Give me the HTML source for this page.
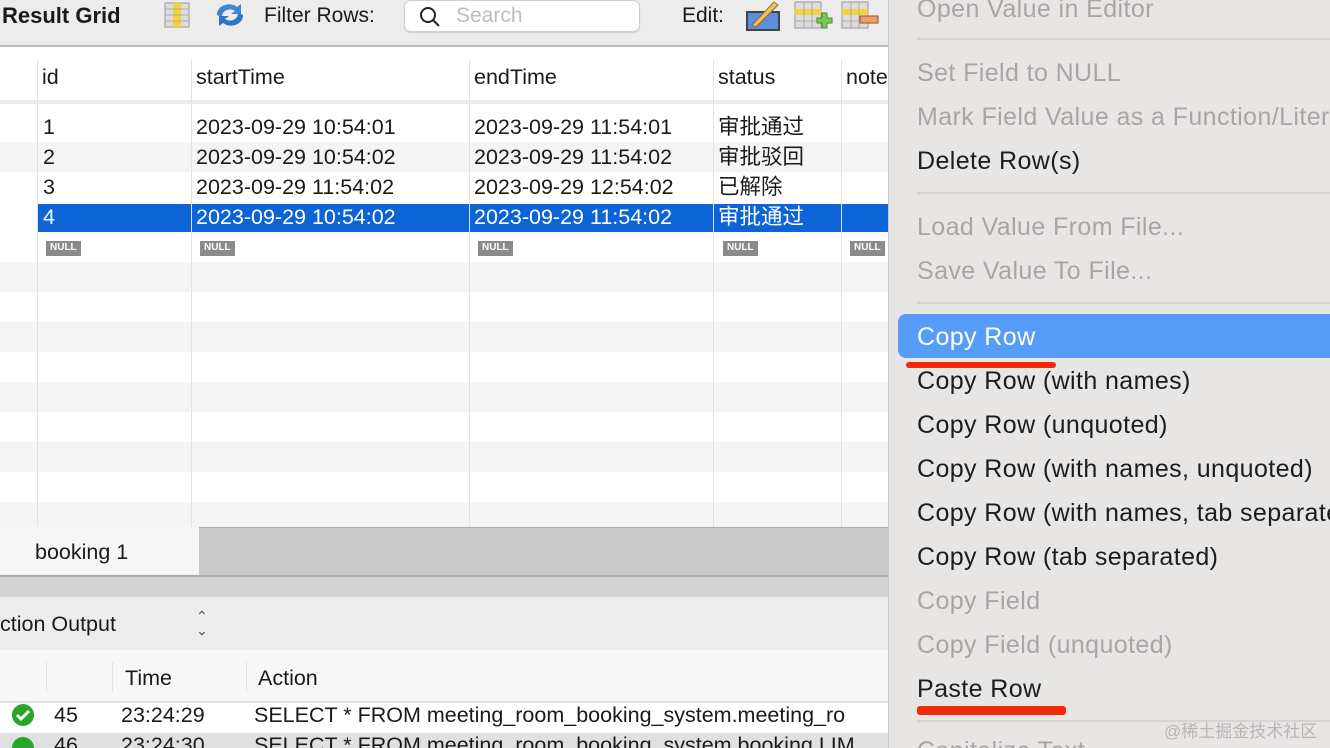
<!DOCTYPE html>
<html><head><meta charset="utf-8"><style>
*{margin:0;padding:0;box-sizing:border-box}
html,body{width:1330px;height:748px;overflow:hidden}
body{position:relative;background:#fff;font-family:"Liberation Sans","Noto Sans CJK SC",sans-serif;color:#1a1a1a}
.a{position:absolute;white-space:nowrap}
.t{font-size:21.5px;line-height:30px}
.vl{position:absolute;width:1px;background:#e2e2e2}
.null{position:absolute;background:#8a8a8a;color:#fff;font-size:10px;font-weight:bold;line-height:14px;padding:0 4px;height:15px}
.m{position:absolute;left:917px;font-size:25px;letter-spacing:0.4px;line-height:30px;color:#1c1c1c;white-space:nowrap}
.g{color:#a8a6a5}
.sep{position:absolute;left:917px;right:0;height:2px;background:#d6d4d3}
</style></head><body>
<div class="a" style="left:0;top:0;width:888px;height:47px;background:#ececec;border-bottom:2px solid #b8b8b8"></div>
<div class="a" style="left:2px;top:1px;font-size:22px;font-weight:bold;line-height:30px">Result Grid</div>
<svg class="a" style="left:164px;top:2px" width="26" height="26"><rect x="1" y="1" width="24" height="24" fill="#ddd" stroke="#999"/><rect x="9" y="1" width="8" height="24" fill="#f3d23a"/><path d="M1 7h24M1 13h24M1 19h24" stroke="#aaa"/></svg>
<svg class="a" style="left:213px;top:1px" width="34" height="28"><path d="M4 14a12 10 0 0 1 20-8l4-3v10h-10l4-3a8 7 0 0 0-13 6z" fill="#3a86d6"/><path d="M30 14a12 10 0 0 1-20 8l-4 3v-10h10l-4 3a8 7 0 0 0 13-6z" fill="#2d74c4"/></svg>
<div class="a" style="left:264px;top:1px;font-size:21px;line-height:30px">Filter Rows:</div>
<div class="a" style="left:404px;top:0;width:236px;height:32px;background:#fff;border:1px solid #d0d0d0;border-radius:7px;box-shadow:0 1px 1px #ccc"></div>
<svg class="a" style="left:418px;top:5px" width="24" height="24"><circle cx="10" cy="10" r="7" fill="none" stroke="#222" stroke-width="2"/><path d="M15 15l6 6" stroke="#222" stroke-width="2"/></svg>
<div class="a" style="left:456px;top:1px;font-size:21px;line-height:30px;color:#bdbdbd">Search</div>
<div class="a" style="left:682px;top:1px;font-size:21px;line-height:30px">Edit:</div>
<svg class="a" style="left:745px;top:0" width="38" height="32"><rect x="2" y="12" width="32" height="18" fill="#5b8ede" stroke="#444" stroke-width="2"/><path d="M7 25l22-23 4 3-22 22z" fill="#f0c060" stroke="#8a6a30"/></svg>
<svg class="a" style="left:793px;top:0" width="40" height="32"><rect x="2" y="2" width="26" height="26" fill="#ddd" stroke="#999"/><rect x="2" y="9" width="26" height="6" fill="#f3d23a"/><path d="M2 21h26M11 2v26M19 2v26" stroke="#aaa"/><path d="M24 18h5v-5h5v5h5v5h-5v5h-5v-5h-5z" fill="#7ec850" stroke="#4a8a30"/></svg>
<svg class="a" style="left:840px;top:0" width="40" height="32"><rect x="2" y="2" width="26" height="26" fill="#ddd" stroke="#999"/><rect x="2" y="9" width="26" height="6" fill="#f3d23a"/><path d="M2 21h26M11 2v26M19 2v26" stroke="#aaa"/><rect x="20" y="16" width="18" height="7" fill="#e8a070" stroke="#a05020"/></svg>
<div class="a" style="left:0;top:49px;width:888px;height:55px;background:#fff;border-bottom:4px solid #ececec"></div>
<div class="a t" style="left:42px;top:62px">id</div>
<div class="a t" style="left:196px;top:62px">startTime</div>
<div class="a t" style="left:474px;top:62px">endTime</div>
<div class="a t" style="left:718px;top:62px">status</div>
<div class="a t" style="left:846px;top:62px">note</div>
<div class="a" style="left:0;top:142px;width:888px;height:30px;background:#f4f4f4"></div>
<div class="a" style="left:0;top:262px;width:888px;height:30px;background:#f4f4f4"></div>
<div class="a" style="left:0;top:322px;width:888px;height:30px;background:#f4f4f4"></div>
<div class="a" style="left:0;top:382px;width:888px;height:30px;background:#f4f4f4"></div>
<div class="a" style="left:0;top:442px;width:888px;height:30px;background:#f4f4f4"></div>
<div class="a" style="left:0;top:502px;width:888px;height:25px;background:#f4f4f4"></div>
<div class="a" style="left:38px;top:204px;width:850px;height:28px;background:#0d64d6"></div>
<div class="vl" style="left:37px;top:60px;height:467px"></div>
<div class="vl" style="left:191px;top:60px;height:467px"></div>
<div class="vl" style="left:469px;top:60px;height:467px"></div>
<div class="vl" style="left:713px;top:60px;height:467px"></div>
<div class="vl" style="left:841px;top:60px;height:467px"></div>
<div class="a t" style="left:43px;top:112px">1</div><div class="a t" style="left:196px;top:112px">2023-09-29 10:54:01</div><div class="a t" style="left:474px;top:112px">2023-09-29 11:54:01</div><div class="a t" style="left:718px;top:112px">审批通过</div>
<div class="a t" style="left:43px;top:142px">2</div><div class="a t" style="left:196px;top:142px">2023-09-29 10:54:02</div><div class="a t" style="left:474px;top:142px">2023-09-29 11:54:02</div><div class="a t" style="left:718px;top:142px">审批驳回</div>
<div class="a t" style="left:43px;top:172px">3</div><div class="a t" style="left:196px;top:172px">2023-09-29 11:54:02</div><div class="a t" style="left:474px;top:172px">2023-09-29 12:54:02</div><div class="a t" style="left:718px;top:172px">已解除</div>
<div class="a t" style="left:43px;top:202px;color:#fff">4</div><div class="a t" style="left:196px;top:202px;color:#fff">2023-09-29 10:54:02</div><div class="a t" style="left:474px;top:202px;color:#fff">2023-09-29 11:54:02</div><div class="a t" style="left:718px;top:202px;color:#fff">审批通过</div>
<div class="null" style="left:46px;top:241px">NULL</div><div class="null" style="left:200px;top:241px">NULL</div><div class="null" style="left:478px;top:241px">NULL</div><div class="null" style="left:723px;top:241px">NULL</div><div class="null" style="left:850px;top:241px">NULL</div>
<div class="a" style="left:0;top:527px;width:888px;height:50px;background:#c9c9c9;border-top:1px solid #aaa;border-bottom:2px solid #aaa"></div>
<div class="a" style="left:0;top:527px;width:199px;height:48px;background:#f6f6f6"></div>
<div class="a t" style="left:35px;top:537px">booking 1</div>
<div class="a" style="left:0;top:577px;width:888px;height:20px;background:#d3d3d3"></div>
<div class="a" style="left:0;top:597px;width:888px;height:53px;background:#ececec"></div>
<div class="a t" style="left:0;top:609px">ction Output</div>
<div class="a" style="left:196px;top:609px;font-size:14px;line-height:14px;color:#555">⌃<br><span style="display:inline-block;transform:rotate(180deg)">⌃</span></div>
<div class="a" style="left:0;top:650px;width:888px;height:53px;background:#f7f7f7;border-bottom:2px solid #e0e0e0"></div>
<div class="vl" style="left:46px;top:662px;height:30px"></div><div class="vl" style="left:112px;top:662px;height:30px"></div><div class="vl" style="left:246px;top:662px;height:30px"></div>
<div class="a t" style="left:125px;top:663px">Time</div>
<div class="a t" style="left:258px;top:663px">Action</div>
<div class="a" style="left:0;top:733px;width:888px;height:15px;background:#e0e0e0"></div>
<svg class="a" style="left:11px;top:703px" width="24" height="24"><circle cx="12" cy="12" r="11" fill="#2aa52a"/><path d="M6 12l4 4 8-8" stroke="#fff" stroke-width="3" fill="none"/></svg>
<svg class="a" style="left:11px;top:736px" width="24" height="24"><circle cx="12" cy="12" r="11" fill="#2aa52a"/></svg>
<div class="a t" style="left:54px;top:700px">45</div><div class="a t" style="left:121px;top:700px">23:24:29</div><div class="a t" style="left:254px;top:700px">SELECT * FROM meeting_room_booking_system.meeting_ro</div>
<div class="a t" style="left:54px;top:730px">46</div><div class="a t" style="left:121px;top:730px">23:24:30</div><div class="a t" style="left:254px;top:730px">SELECT * FROM meeting_room_booking_system.booking LIM</div>
<div class="a" style="left:888px;top:0;width:442px;height:748px;background:#e8e6e5;border-left:1px solid #c8c8c8"></div>
<div class="m g" style="top:-6px">Open Value in Editor</div>
<div class="sep" style="top:38px"></div>
<div class="m g" style="top:58px">Set Field to NULL</div>
<div class="m g" style="top:102px">Mark Field Value as a Function/Literal</div>
<div class="m" style="top:146px">Delete Row(s)</div>
<div class="sep" style="top:192px"></div>
<div class="m g" style="top:212px">Load Value From File...</div>
<div class="m g" style="top:256px">Save Value To File...</div>
<div class="sep" style="top:302px"></div>
<div class="a" style="left:898px;top:314px;width:440px;height:44px;background:#569cf8;border-radius:8px"></div>
<div class="m" style="top:322px;color:#fff">Copy Row</div>
<div class="a" style="left:906px;top:362px;width:150px;height:6px;background:#f22a0a;border-radius:3px"></div>
<div class="m" style="top:366px">Copy Row (with names)</div>
<div class="m" style="top:410px">Copy Row (unquoted)</div>
<div class="m" style="top:454px">Copy Row (with names, unquoted)</div>
<div class="m" style="top:498px">Copy Row (with names, tab separated)</div>
<div class="m" style="top:542px">Copy Row (tab separated)</div>
<div class="m g" style="top:586px">Copy Field</div>
<div class="m g" style="top:630px">Copy Field (unquoted)</div>
<div class="m" style="top:674px">Paste Row</div>
<div class="a" style="left:917px;top:706px;width:149px;height:9px;background:#f22a0a;border-radius:3px"></div>
<div class="sep" style="top:720px"></div>
<div class="m g" style="top:736px">Capitalize Text</div>
<div class="a" style="left:1164px;top:720px;font-size:17px;line-height:24px;color:#b8b6b5">@稀土掘金技术社区</div>
</body></html>
